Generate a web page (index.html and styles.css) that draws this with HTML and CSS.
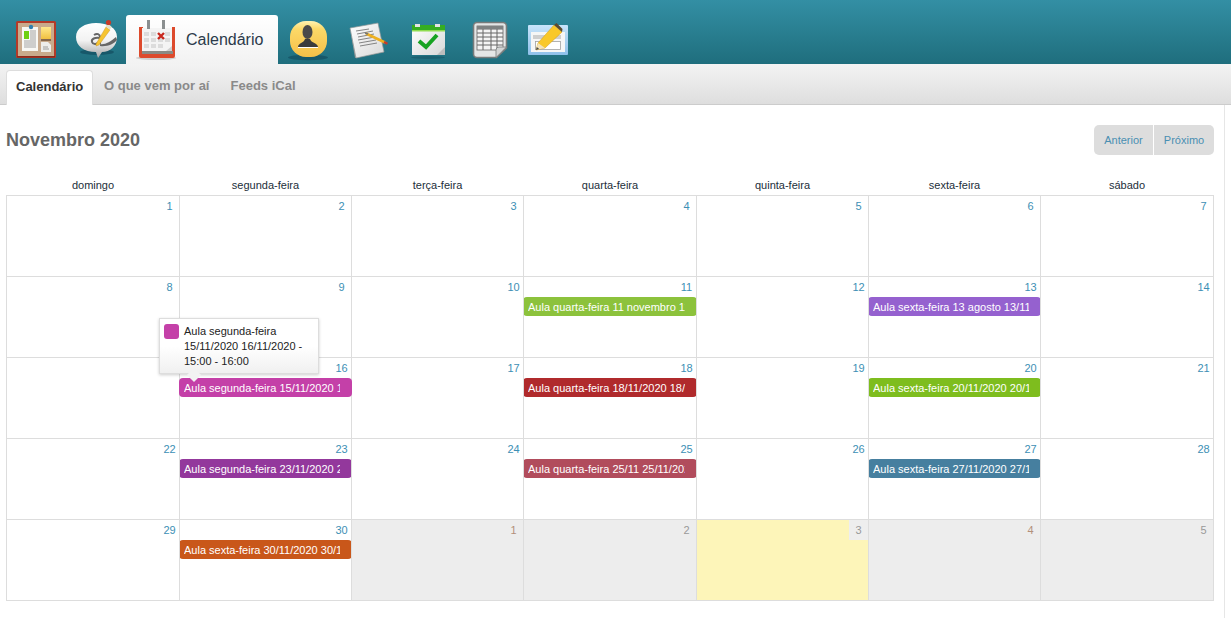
FILE: index.html
```html
<!DOCTYPE html>
<html lang="pt">
<head>
<meta charset="utf-8">
<title>Calendário</title>
<link rel="stylesheet" href="styles.css">
</head>
<body>
<header class="topbar">
  <nav class="mainnav">
    <a class="navicon">
      <svg width="48" height="48" viewBox="12 16 48 48">
        <defs>
          <linearGradient id="gNote" x1="0" y1="0" x2="0" y2="1"><stop offset="0" stop-color="#ffe98c"/><stop offset="1" stop-color="#f0c040"/></linearGradient>
          <linearGradient id="gBubble" x1="0" y1="0" x2="0" y2="1"><stop offset="0" stop-color="#ffffff"/><stop offset="0.5" stop-color="#f2f2f2"/><stop offset="1" stop-color="#a4a4a4"/></linearGradient>
          <linearGradient id="gUser" x1="0" y1="0" x2="0" y2="1"><stop offset="0" stop-color="#fff3b4"/><stop offset="0.22" stop-color="#fcd968"/><stop offset="1" stop-color="#f5bf48"/></linearGradient>
          <linearGradient id="gPage" x1="0" y1="0" x2="1" y2="1"><stop offset="0" stop-color="#ffffff"/><stop offset="1" stop-color="#d8d8d8"/></linearGradient>
          <linearGradient id="gWin" x1="0" y1="0" x2="0" y2="1"><stop offset="0" stop-color="#c8e4fa"/><stop offset="1" stop-color="#8fc0ea"/></linearGradient>
        </defs>
        <rect x="16" y="21" width="40" height="37" rx="1.5" fill="#b43a28"/>
        <rect x="18" y="23" width="36" height="33" fill="#c9ab8c"/>
        <rect x="17" y="56" width="38" height="1.500" fill="#8d2a1c"/>
        <rect x="22" y="27" width="16" height="24" fill="#f8f8f4"/>
        <rect x="24" y="31" width="5" height="8" fill="#6fd010"/>
        <path d="M30 31h6M30 33h6M30 35h6M30 37h6M30 39h6M24 41h12M24 43h12M24 45h12M24 47h12" stroke="#a4a4a4" stroke-width="1"/>
        <circle cx="31" cy="27" r="2.200" fill="#2f7fb0"/>
        <rect x="41" y="32" width="10" height="9" fill="#85684c"/>
        <rect x="41" y="27" width="10" height="12" fill="url(#gNote)"/>
        <path d="M41 42h7l3 3v7h-10z" fill="#eeeeea"/>
        <path d="M43 47h5M43 49h6" stroke="#888" stroke-width="0.8"/>
      </svg>
    </a>
    <a class="navicon">
      <svg width="48" height="48" viewBox="72 16 48 48">
        <ellipse cx="97" cy="52" rx="17" ry="3" fill="#17586a"/>
        <path d="M96 23c12 0 21 5 21 14s-7 15-15 15l-4 6-2-6c-12 0-20-6-20-15s9-14 20-14z" fill="url(#gBubble)"/>
        <path d="M94 35c3-2 6-1 6 2v7M100 38c-5-1-9 1-8 4s6 3 8-2" fill="none" stroke="#666" stroke-width="2"/>
        <path d="M100 44c5 1 10-2 16-7l1 3c-3 4-10 7-17 6z" fill="#666"/>
        <path d="M96 44l0 2 3-1 11-15-4-3z" fill="#f6c430" stroke="#c08a20" stroke-width="0.4"/>
        <path d="M105.500 26.500l2-3 4 3-1.500 3z" fill="#e8e0c8"/>
        <circle cx="108.500" cy="22.500" r="2.600" fill="#c83a28"/>
      </svg>
    </a>
    <a class="navtab">
      <svg width="48" height="48" viewBox="132 16 48 48">
        <ellipse cx="156" cy="58" rx="20" ry="2" fill="#cfcfcf"/>
        <path d="M139 27h4v24h29v-24h3v29a2 2 0 0 1-2 2h-32a2 2 0 0 1-2-2z" fill="#dd4a2c"/>
        <rect x="142" y="28" width="30" height="23" fill="#f4f4f4"/>
        <rect x="142" y="51" width="31" height="3" fill="#8a8a84"/>
        <path d="M147 20h3v9h-3zM162 20h3v9h-3z" fill="#8b8f90"/>
        <path d="M144 32h5v4h-5zM151 32h5v4h-5zM165 32h5v4h-5zM144 38h5v4h-5zM151 38h5v4h-5zM158 38h5v4h-5zM165 38h5v4h-5zM144 44h5v4h-5zM151 44h5v4h-5zM158 44h5v4h-5z" fill="#dcdcdc"/>
        <path d="M158 33l6 6M164 33l-6 6" stroke="#c8281e" stroke-width="2.400"/>
        <path d="M172 46v5h-6z" fill="#cfcfcf"/>
      </svg>
      <span class="navtab-label">Calendário</span>
    </a>
    <a class="navicon">
      <svg width="48" height="48" viewBox="284 16 48 48">
        <ellipse cx="308" cy="57.500" rx="20" ry="2.800" fill="#17586a"/>
        <rect x="290" y="21" width="37" height="36" rx="16" fill="url(#gUser)"/>
        <ellipse cx="307.500" cy="32" rx="5" ry="7" fill="#4a4a4a"/>
        <path d="M298 47c0-4 6-4 7-8h5c1 4 8 4 8 8z" fill="#3c3c3c"/>
        <path d="M298 47.500h20" stroke="#fff" stroke-width="1"/>
      </svg>
    </a>
    <a class="navicon">
      <svg width="48" height="48" viewBox="344 16 48 48">
        <path d="M350 29l5 29 29-6-1-4-27 6z" fill="#8f9696"/>
        <path d="M350 28l28-5 6 29-28 6z" fill="url(#gPage)" stroke="#8f9696" stroke-width="0.7"/>
        <path d="M356 31l13-2M357 34l16-3M358 37l16-3M358 40l17-3M359 43l17-3M360 46l17-3" stroke="#777" stroke-width="0.9"/>
        <path d="M366 33.500l19 9" stroke="#eeb020" stroke-width="2.600"/>
        <path d="M365 33l3 1" stroke="#777" stroke-width="1.500"/>
        <path d="M384 42l3.500 1.800" stroke="#c83a28" stroke-width="2.200"/>
      </svg>
    </a>
    <a class="navicon">
      <svg width="48" height="48" viewBox="404 16 48 48">
        <ellipse cx="428" cy="57.500" rx="17" ry="1.500" fill="#1b6070"/>
        <path d="M412 25h33v30h-33z" fill="url(#gPage)"/>
        <path d="M412 25h33v6h-33z" fill="#35ad22"/>
        <path d="M412 30h33v1.500h-33z" fill="#8fdc50"/>
        <path d="M415 24h5v3h-5zM435 24h5v3h-5z" fill="#e4e4e4"/>
        <path d="M419 41l7 6 11-12" fill="none" stroke="#18a322" stroke-width="4"/>
        <path d="M445 47v8h-8z" fill="#bdbdbd"/>
      </svg>
    </a>
    <a class="navicon">
      <svg width="48" height="48" viewBox="464 16 48 48">
        <path d="M477 22.500h26a3.500 3.500 0 0 1 3.500 3.500v22l-10 9.500h-19.500a3.500 3.500 0 0 1-3.500-3.500v-28a3.500 3.500 0 0 1 3.500-3.500z" fill="#e4e6e6" stroke="#777b7b" stroke-width="1.600"/>
        <rect x="477" y="26" width="26" height="24" fill="#f4f4f4" stroke="#666" stroke-width="0.8"/>
        <path d="M477 29h26M477 33h26M477 37h26M477 41h26M477 45h26M483 26v24M491 26v24M497 26v24" stroke="#666" stroke-width="1"/>
        <rect x="477" y="26" width="26" height="3" fill="#7f8282"/>
        <path d="M506.500 47l-10.500 10.500v-7.500a3 3 0 0 1 3-3z" fill="#d2d4d4" stroke="#777b7b" stroke-width="0.8"/>
      </svg>
    </a>
    <a class="navicon">
      <svg width="48" height="48" viewBox="524 16 48 48">
        <rect x="528" y="25" width="40" height="30" rx="1" fill="url(#gWin)"/>
        <rect x="531" y="32" width="34" height="20" fill="#f6f6f6"/>
        <path d="M533 36h28M533 38h28" stroke="#a8a8a8" stroke-width="1"/>
        <rect x="535.500" y="41.500" width="25" height="8" fill="#fff" stroke="#a0a0a0" stroke-width="0.8"/>
        <path d="M536 50l2-7 16-18 8 7-17 16z" fill="#f9c828" stroke="#d09a18" stroke-width="0.5"/>
        <path d="M536 50l2-7 7 5z" fill="#f3e2ba"/>
        <path d="M536 50l.8-3 2.400 2z" fill="#444"/>
        <path d="M554 25l2.500-2 6 6-.5 3z" fill="#5a4a30"/>
      </svg>
    </a>
  </nav>
</header>
<nav class="subnav">
  <a class="subtab subtab-active">Calendário</a>
  <a class="subtab">O que vem por aí</a>
  <a class="subtab">Feeds iCal</a>
</nav>
<main class="content">
  <div class="cal-head">
    <h1 class="cal-title">Novembro 2020</h1>
    <div class="pager">
      <a class="pager-btn">Anterior</a>
      <a class="pager-btn">Próximo</a>
    </div>
  </div>
  <table class="cal">
    <colgroup>
      <col class="col-wide"><col class="col-narrow"><col class="col-narrow"><col class="col-wide"><col class="col-narrow"><col class="col-narrow"><col class="col-wide">
    </colgroup>
    <thead>
      <tr><th>domingo</th><th>segunda-feira</th><th>terça-feira</th><th>quarta-feira</th><th>quinta-feira</th><th>sexta-feira</th><th>sábado</th></tr>
    </thead>
    <tbody>
      <tr>
        <td><div class="num">1</div></td><td><div class="num">2</div></td><td><div class="num">3</div></td><td><div class="num">4</div></td><td><div class="num">5</div></td><td><div class="num">6</div></td><td><div class="num">7</div></td>
      </tr>
      <tr>
        <td><div class="num">8</div></td>
        <td><div class="num">9</div></td>
        <td><div class="num">10</div></td>
        <td><div class="num">11</div><div class="ev ev-lime"><span class="ev-text">Aula quarta-feira 11 novembro 11/11/2020</span></div></td>
        <td><div class="num">12</div></td>
        <td><div class="num">13</div><div class="ev ev-violet"><span class="ev-text">Aula sexta-feira 13 agosto 13/11/2020</span></div></td>
        <td><div class="num">14</div></td>
      </tr>
      <tr>
        <td><div class="num">15</div></td>
        <td class="has-tip">
          <div class="num">16</div><div class="ev ev-magenta"><span class="ev-text">Aula segunda-feira 15/11/2020 16/11/2020</span></div>
          <div class="tip">
            <span class="tip-swatch"></span>
            <span class="tip-text">Aula segunda-feira 15/11/2020 16/11/2020 - 15:00 - 16:00</span>
            <span class="tip-arrow"></span>
          </div>
        </td>
        <td><div class="num">17</div></td>
        <td><div class="num">18</div><div class="ev ev-red"><span class="ev-text">Aula quarta-feira 18/11/2020 18/11/2020</span></div></td>
        <td><div class="num">19</div></td>
        <td><div class="num">20</div><div class="ev ev-green"><span class="ev-text">Aula sexta-feira 20/11/2020 20/11/2020</span></div></td>
        <td><div class="num">21</div></td>
      </tr>
      <tr>
        <td><div class="num">22</div></td>
        <td><div class="num">23</div><div class="ev ev-purple"><span class="ev-text">Aula segunda-feira 23/11/2020 23/11/2020</span></div></td>
        <td><div class="num">24</div></td>
        <td><div class="num">25</div><div class="ev ev-rose"><span class="ev-text">Aula quarta-feira 25/11 25/11/2020 25/11/2020</span></div></td>
        <td><div class="num">26</div></td>
        <td><div class="num">27</div><div class="ev ev-teal"><span class="ev-text">Aula sexta-feira 27/11/2020 27/11/2020</span></div></td>
        <td><div class="num">28</div></td>
      </tr>
      <tr>
        <td><div class="num">29</div></td>
        <td><div class="num">30</div><div class="ev ev-orange"><span class="ev-text">Aula sexta-feira 30/11/2020 30/11/2020</span></div></td>
        <td class="other"><div class="num num-warm">1</div></td>
        <td class="other"><div class="num">2</div></td>
        <td class="today"><div class="num num-today">3</div></td>
        <td class="other"><div class="num num-warm">4</div></td>
        <td class="other"><div class="num">5</div></td>
      </tr>
    </tbody>
  </table>
</main>
</body>
</html>
```
FILE: styles.css
```css
* { box-sizing: border-box; }
html, body { margin: 0; padding: 0; height: 100%; overflow: hidden; }
body { background: #fff; font-family: "Liberation Sans", Arial, sans-serif; font-size: 11px; color: #222; }

.topbar { height: 64px; background: linear-gradient(#338fa4, #1f6e7d); padding: 15px 0 0 6px; }
.mainnav { display: flex; height: 49px; }
.navicon { width: 60px; height: 49px; display: flex; justify-content: center; align-items: flex-end; }
.navicon svg, .navtab svg { display: block; flex: none; }
.navtab { width: 152px; height: 49px; padding-left: 6px; display: flex; align-items: flex-end; background: linear-gradient(#fff, #f2f2f2); border-radius: 3px 3px 0 0; }
.navtab-label { align-self: center; margin-left: 6px; font-size: 16px; color: #2b3a4a; }

.subnav { height: 41px; display: flex; align-items: flex-end; padding-left: 6px; background: linear-gradient(#f3f3f3, #dedede); border-bottom: 1px solid #ccc; }
.subtab { height: 34px; line-height: 31px; padding: 0 10px; margin-right: 1px; font-size: 13px; font-weight: bold; color: #8a8a8a; }
.subtab-active { width: 87px; margin-right: 1px; background: #fff; color: #333; border: 1px solid #ddd; border-bottom: 0; border-radius: 4px 4px 0 0; padding: 0 9px; margin-bottom: -1px; height: 35px; }

.content { width: 1225px; height: 513px; padding: 20px 10px 0 6px; border-right: 1px solid #e6e6e6; }
.cal-head { display: flex; justify-content: space-between; align-items: center; height: 30px; }
.cal-title { margin: 0; font-size: 18px; font-weight: bold; color: #666; }
.pager { display: flex; height: 30px; border-radius: 5px; overflow: hidden; }
.pager-btn { width: 60px; line-height: 30px; text-align: center; background: #ddd; color: #4a8fb2; font-size: 11px; }
.pager-btn:first-child { border-right: 1px solid #fff; }

.cal { width: 1208px; margin-top: 21px; border-collapse: collapse; table-layout: fixed; }
.col-wide { width: 173px; }
.col-narrow { width: 172px; }
.cal th { height: 19px; padding: 0; font-weight: normal; font-size: 11px; color: #222e3a; }
.cal td { height: 81px; padding: 0; vertical-align: top; border: 1px solid #ddd; }
.has-tip { position: relative; }

.num { width: 19px; height: 20px; margin-left: auto; padding-top: 2px; line-height: 17px; text-align: center; font-size: 11px; color: #3d8fb5; white-space: nowrap; }
.other { background: #ededed; }
.other .num { color: #999; }
.other .num-warm { color: #b3907a; }
.today { background: #fdf5b9; }
.num-today { background: #eeeeee; color: #999; }

.ev { height: 19px; margin: 0 -1px; padding: 0 12px 0 5px; border-radius: 4px; color: #fff; line-height: 20px; font-size: 11px; overflow: hidden; white-space: nowrap; }
.ev-text { display: block; overflow: hidden; }
.ev-lime { background: #8cc23c; }
.ev-violet { background: #9561cf; }
.ev-magenta { background: #c440a8; }
.ev-red { background: #b02a2c; }
.ev-green { background: #7ebd1e; }
.ev-purple { background: #93389c; }
.ev-rose { background: #b14c5c; }
.ev-teal { background: #467f9f; }
.ev-orange { background: #c9571a; }

.tip { position: absolute; left: -21px; top: -40px; width: 160px; height: 56px; padding: 5px 10px 0 24px; background: linear-gradient(#fff 50%, #f0f0f0); border: 1px solid #ddd; box-shadow: 0 1px 3px rgba(0, 0, 0, .2); line-height: 15px; font-size: 11px; color: #222; }
.tip-swatch { position: absolute; left: 4px; top: 5px; width: 15px; height: 15px; border-radius: 3px; background: #c440a8; }
.tip-text { display: block; }
.tip-arrow { position: absolute; left: 29px; top: 51px; width: 10px; height: 10px; background: #f2f2f2; transform: rotate(45deg); }
```
